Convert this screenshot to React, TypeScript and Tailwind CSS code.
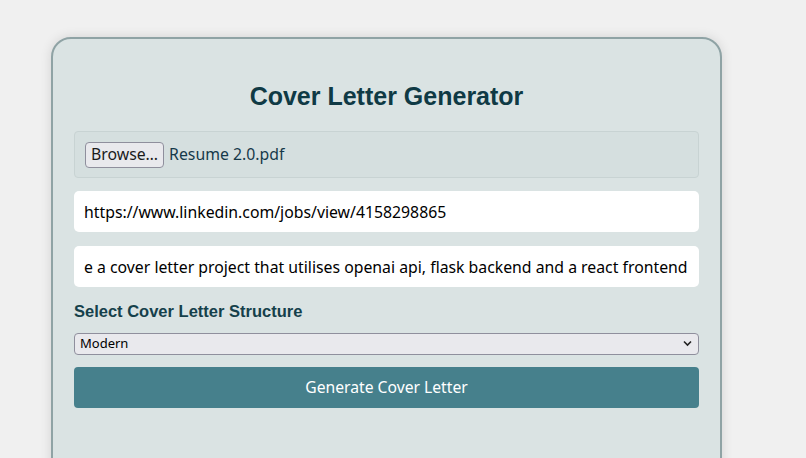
import { useState } from "react";

function App() {
  const [url, setUrl] = useState<string>("https://www.linkedin.com/jobs/view/4158298865");
  const [desc, setDesc] = useState<string>(
    "e a cover letter project that utilises openai api, flask backend and a react frontend"
  );
  const [structure, setStructure] = useState<string>("Modern");
  const bodyFont = { fontFamily: '"Noto Sans", "Open Sans", sans-serif' };

  return (
    <div className="min-h-[458px] h-[458px] overflow-hidden bg-[#f0f0f0] pt-[37px] pl-[51px]">
      <div className="w-[671px] h-[500px] bg-[#dae3e3] border-2 border-[#8fa3a5] rounded-[20px] shadow-[0_0_12px_rgba(0,0,0,0.12)] px-[21px] pt-[39px]">
        <h1 className="text-center text-[25px] font-bold text-[#0f3a45] font-['Liberation_Sans',Arial,sans-serif] leading-[36px]">
          Cover Letter Generator
        </h1>
        <div className="mt-[17px] h-[47px] flex items-center px-[10px] bg-[#d5dfdf] border border-[#c8d3d3] rounded-[4px] gap-[5px]" style={bodyFont}>
          <button className="h-[26px] px-[5px] bg-[#e9e9ed] border border-[#8f8f9d] rounded-[4px] text-[15.8px] text-[#1b1b1b]">
            Browse…
          </button>
          <span className="text-[15.8px] text-[#15394a]">Resume 2.0.pdf</span>
        </div>
        <input
          value={url}
          onChange={(e) => setUrl(e.target.value)}
          className="mt-[13px] block w-full h-[41px] bg-white rounded-[5px] px-[10px] text-[15.8px] text-black outline-none"
          style={bodyFont}
        />
        <input
          value={desc}
          onChange={(e) => setDesc(e.target.value)}
          className="mt-[14px] block w-full h-[41px] bg-white rounded-[5px] pl-[10px] pr-[6px] text-[15.8px] text-black outline-none"
          style={bodyFont}
        />
        <label className="block mt-[13px] text-[16.5px] font-bold text-[#15404b] font-['Liberation_Sans',Arial,sans-serif] leading-[22px]">
          Select Cover Letter Structure
        </label>
        <div className="relative mt-[11px]">
          <select
            value={structure}
            onChange={(e) => setStructure(e.target.value)}
            className="appearance-none block w-full h-[22px] bg-[#e9e9ed] border border-[#8f8f9d] rounded-[4px] pl-[5px] text-[13px] text-black outline-none"
            style={bodyFont}
          >
            <option>Modern</option>
            <option>Classic</option>
            <option>Creative</option>
          </select>
          <svg className="absolute right-[7px] top-[7px] pointer-events-none" width="9" height="7" viewBox="0 0 9 7">
            <path d="M1 1.5 L4.5 5 L8 1.5" fill="none" stroke="#222" strokeWidth="1.6" />
          </svg>
        </div>
        <button
          className="mt-[12px] block w-full h-[41px] bg-[#46808c] rounded-[4px] text-white text-[15.7px]"
          style={bodyFont}
        >
          Generate Cover Letter
        </button>
      </div>
    </div>
  );
}

export default App;
